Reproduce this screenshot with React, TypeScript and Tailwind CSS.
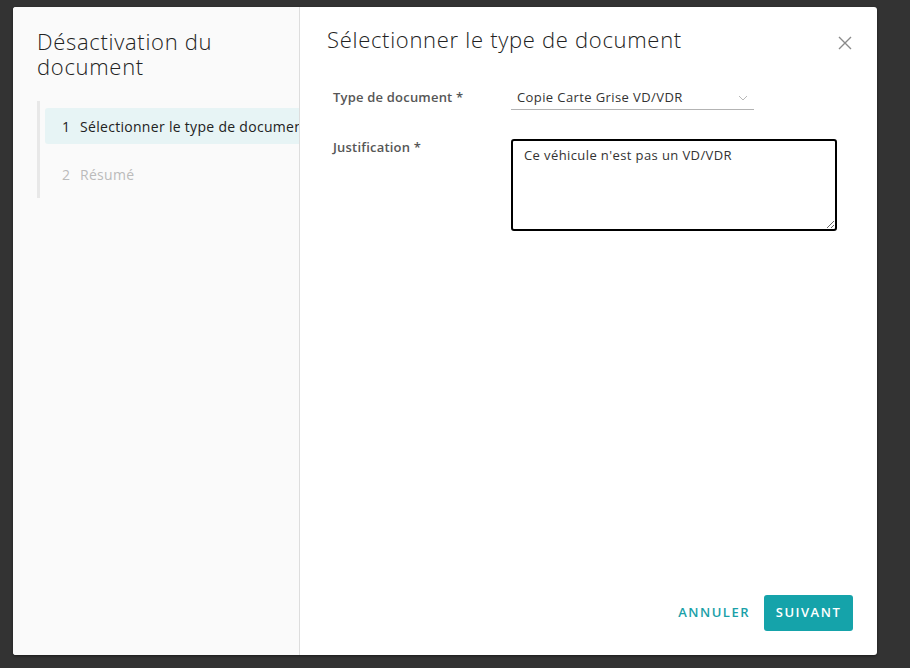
import React from "react";

export default function App() {
  const font = { fontFamily: "'Open Sans', Lato, sans-serif" };
  return (
    <div className="w-[910px] h-[668px] bg-[#333333] overflow-hidden pt-[7px] pl-[13px]" style={font}>
      <div className="w-[864px] h-[648px] bg-white rounded-[3px] flex overflow-hidden shadow-[0_1px_3px_rgba(0,0,0,0.5)]">
        <div className="w-[287px] shrink-0 bg-[#fafafa] border-r border-[#dddddd] pt-[22px] overflow-hidden">
          <h1 className="pl-[24px] text-[22px] leading-[25px] font-light text-[#222222] tracking-[0.7px]">
            Désactivation du<br />document
          </h1>
          <div className="ml-[24px] mt-[22px] border-l-[3px] border-[#e8e8e8] pt-[7px] pb-[6px] pl-[5px]">
            <div className="h-[36px] bg-[#e7f4f5] rounded-l-[3px] flex items-center pl-[17px] text-[14px] text-[#222222] whitespace-nowrap tracking-[0.3px]">
              <span className="w-[18px] shrink-0">1</span>
              <span className="shrink-0">Sélectionner le type de document</span>
            </div>
            <div className="h-[36px] mt-[12px] flex items-center pl-[17px] text-[14px] text-[#bbbbbb] whitespace-nowrap tracking-[0.3px]">
              <span className="w-[18px] shrink-0">2</span>
              <span className="shrink-0">Résumé</span>
            </div>
          </div>
        </div>
        <div className="flex-1 flex flex-col pl-[27px] pr-[24px]">
          <div className="flex items-start justify-between pt-[19px]">
            <h2 className="text-[22px] leading-[26px] font-light text-[#222222] tracking-[0.7px]">
              Sélectionner le type de document
            </h2>
            <svg width="14" height="14" viewBox="0 0 14 14" className="mt-[10px] mr-[1px]">
              <path d="M1 1 L13 13 M13 1 L1 13" stroke="#8a8a8a" strokeWidth="1.4" />
            </svg>
          </div>
          <div className="mt-[34px] pl-[6px] flex items-center">
            <label className="w-[178px] text-[13px] font-semibold text-[#565656] tracking-[0.2px]">Type de document *</label>
            <div className="w-[243px] h-[24px] border-b border-[#b3b3b3] flex items-center justify-between pl-[6px] pr-[6px]">
              <span className="text-[13px] text-[#333333] tracking-[0.4px]">Copie Carte Grise VD/VDR</span>
              <svg width="10" height="6" viewBox="0 0 10 6">
                <path d="M1 1 L5 5 L9 1" stroke="#b8b8b8" strokeWidth="1" fill="none" />
              </svg>
            </div>
          </div>
          <div className="mt-[29px] pl-[6px] flex items-start">
            <label className="w-[178px] text-[13px] font-semibold text-[#565656] -mt-[1px] tracking-[0.2px]">Justification *</label>
            <textarea
              defaultValue="Ce véhicule n'est pas un VD/VDR"
              className="w-[326px] h-[92px] border-2 border-black rounded-[3px] px-[11px] py-[5px] text-[13px] text-[#333333] outline-none resize-y tracking-[0.4px]"
              style={font}
            />
          </div>
          <div className="flex-1" />
          <div className="flex items-center justify-end gap-[14px] pb-[24px]">
            <button className="h-[36px] text-[13px] font-semibold tracking-[1.5px] text-[#1aa0a8]">ANNULER</button>
            <button className="h-[36px] w-[89px] rounded-[3px] bg-[#15a3aa] text-white text-[13px] font-semibold tracking-[1.5px]">SUIVANT</button>
          </div>
        </div>
      </div>
    </div>
  );
}
